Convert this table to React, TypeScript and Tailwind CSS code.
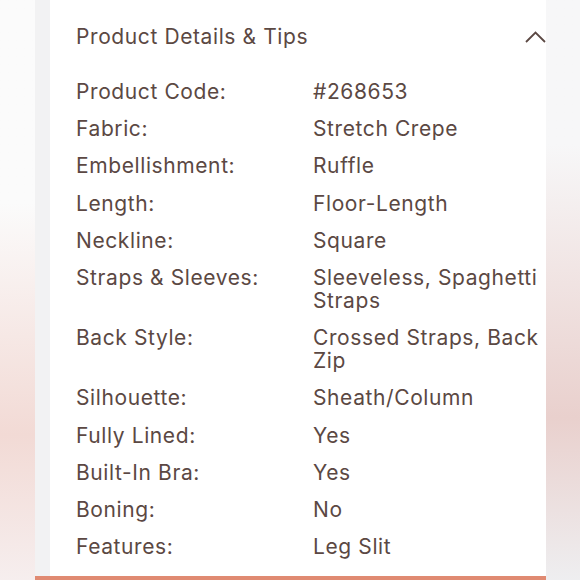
const rows: [string, string][] = [
  ["Product Code:", "#268653"],
  ["Fabric:", "Stretch Crepe"],
  ["Embellishment:", "Ruffle"],
  ["Length:", "Floor-Length"],
  ["Neckline:", "Square"],
  ["Straps & Sleeves:", "Sleeveless, Spaghetti Straps"],
  ["Back Style:", "Crossed Straps, Back Zip"],
  ["Silhouette:", "Sheath/Column"],
  ["Fully Lined:", "Yes"],
  ["Built-In Bra:", "Yes"],
  ["Boning:", "No"],
  ["Features:", "Leg Slit"],
];

export default function App() {
  return (
    <div
      className="flex h-[580px] w-[580px] overflow-hidden text-[#5b4843] tracking-[0.6px]"
      style={{ fontFamily: "Inter, 'Open Sans', sans-serif" }}
    >
      <div className="w-[35px] shrink-0 bg-gradient-to-b from-[#fbfbfb] from-35% via-[#f2dad5] via-75% to-[#f6eeee]" />
      <div className="flex flex-1 flex-col">
        <div className="flex flex-1">
          <div className="w-[15px] shrink-0 bg-[#f2f2f3]" />
          <div className="flex-1 bg-white pl-[26px] pt-[25px]">
            <div className="flex items-center justify-between">
              <span className="text-[21px] leading-[23px]">Product Details &amp; Tips</span>
              <svg width="21" height="12" viewBox="0 0 21 12" fill="none" stroke="#5b4843" strokeWidth="1.8">
                <path d="M1 11 L10.5 1.5 L20 11" />
              </svg>
            </div>
            <div className="mt-[32px] grid grid-cols-[237px_230px] gap-y-[14.2px] text-[21px] leading-[23px]">
              {rows.map(([k, v]) => (
                <div key={k} className="contents">
                  <div>{k}</div>
                  <div>{v}</div>
                </div>
              ))}
            </div>
          </div>
        </div>
        <div className="h-[4px] bg-[#e08a72]" />
      </div>
      <div className="w-[34px] shrink-0 bg-gradient-to-b from-[#f7f7f8] from-25% via-[#e9d0cd] via-72% to-[#eeeef0]" />
    </div>
  );
}
